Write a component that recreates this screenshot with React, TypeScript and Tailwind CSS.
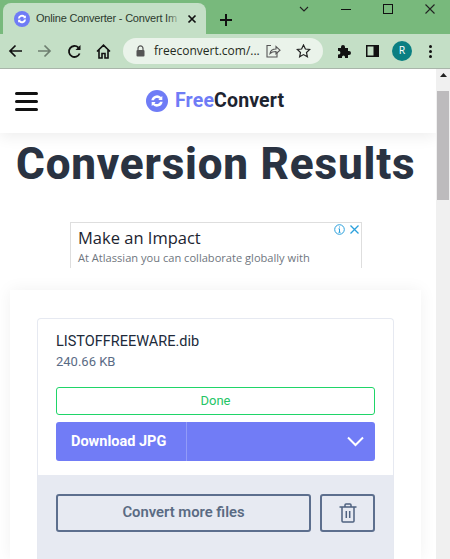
import React from "react";

const F = "[font-family:Roboto,'Liberation_Sans',sans-serif]";

function Logo({ size }: { size: number }) {
  return (
    <svg width={size} height={size} viewBox="0 0 24 24">
      <circle cx="12" cy="12" r="12" fill="#6f7cf6" />
      <path d="M5.800 11.200a6.300 6.300 0 0 1 10.600-3.600l1.400-1v4.400h-4.400l1.400-1.400a3.900 3.900 0 0 0-6.200 1.600z" fill="#fff" />
      <path d="M18.200 12.800a6.300 6.300 0 0 1-10.600 3.600l-1.400 1v-4.400h4.400l-1.400 1.400a3.900 3.900 0 0 0 6.200-1.600z" fill="#fff" />
    </svg>
  );
}

function Chrome() {
  return (
    <div className="flex flex-col shrink-0 font-['Open_Sans',sans-serif]">
      <div className="h-[34px] bg-[#78b97c] flex items-end relative">
        <div className="ml-[3px] w-[203px] h-[31px] bg-[#c4dfc6] rounded-t-lg flex items-center pl-[11px]">
          <Logo size={16} />
          <div className="relative ml-[6px] w-[145px] overflow-hidden whitespace-nowrap text-[11px] tracking-[-0.2px] text-[#2c3a2e] font-['Liberation_Sans',sans-serif]">
            Online Converter - Convert Im
            <div className="absolute right-0 top-0 bottom-0 w-[14px] bg-gradient-to-r from-transparent to-[#c4dfc6]" />
          </div>
          <svg className="ml-[6px]" width="10" height="10" viewBox="0 0 10 10" stroke="#111" strokeWidth="1.700" fill="none"><path d="M1.500 1.500l7 7M8.500 1.500l-7 7" /></svg>
        </div>
        <svg className="ml-[14px] mb-[8px]" width="12" height="12" viewBox="0 0 12 12" stroke="#111" strokeWidth="2" fill="none"><path d="M6 0v12M0 6h12" /></svg>
        <div className="flex-1" />
        <div className="self-start flex items-center h-[18px]">
          <svg width="10" height="6" viewBox="0 0 10 6" stroke="#222" strokeWidth="1.100" fill="none"><path d="M1 1l4 4 4-4" /></svg>
          <div className="ml-[32px] w-[10px] h-[1px] bg-[#111]" />
          <div className="ml-[32px] w-[10px] h-[10px] border-[1.500px] border-[#111]" />
          <svg className="ml-[32px] mr-[15px]" width="10" height="10" viewBox="0 0 10 10" stroke="#222" strokeWidth="1.100" fill="none"><path d="M0.500 0.500l9 9M9.500 0.500l-9 9" /></svg>
        </div>
      </div>
      <div className="h-[34px] bg-[#c4dfc6] flex items-center border-b border-[#a9b5aa] box-content">
        <svg className="ml-[8px]" width="15" height="14" viewBox="0 0 15 14" stroke="#111" strokeWidth="1.700" fill="none"><path d="M14 7H2M7.500 1.500L2 7l5.500 5.500" /></svg>
        <svg className="ml-[14px]" width="15" height="14" viewBox="0 0 15 14" stroke="#6e7f70" strokeWidth="1.700" fill="none"><path d="M1 7h12M7.500 1.500L13 7l-5.500 5.500" /></svg>
        <svg className="ml-[15px]" width="15" height="15" viewBox="0 0 15 15" stroke="#111" strokeWidth="1.800" fill="none"><path d="M12.600 9.500A5.500 5.500 0 1 1 11.400 3.600" /><path d="M13.500 1v5h-5z" fill="#111" stroke="none" /></svg>
        <svg className="ml-[14px]" width="15" height="15" viewBox="0 0 15 15" stroke="#111" strokeWidth="1.600" fill="none"><path d="M1 7.500L7.500 1.200 14 7.500M3 6v8h3V9.500h3V14h3V6" /></svg>
        <div className="ml-[12px] w-[200px] h-[26px] rounded-full bg-[#eaf3ea] flex items-center pl-[13px]">
          <svg width="9" height="12" viewBox="0 0 9 12"><path d="M2 5V3.400a2.500 2.500 0 0 1 5 0V5" stroke="#555" strokeWidth="1.200" fill="none" /><rect x="0.500" y="5" width="8" height="6.500" rx="1" fill="#555" /></svg>
          <span className="ml-[9px] w-[105px] text-[12px] text-[#1f2a20] whitespace-nowrap">freeconvert.com/...</span>
          <svg className="ml-[7px]" width="15" height="14" viewBox="0 0 15 14" stroke="#555" strokeWidth="1.100" fill="none"><path d="M5 1.500H1v11.500h10V9" /><path d="M4 9.500c.5-3 2.500-4.500 6-4.500V2.500l4 3.700-4 3.500V7.500c-2.500 0-4.500.5-6 2z" /></svg>
          <svg className="ml-[15px]" width="15" height="14" viewBox="0 0 15 14" stroke="#222" strokeWidth="1.200" fill="none"><path d="M7.500 1l1.900 4 4.300.5-3.200 3 .9 4.300-3.900-2.200-3.900 2.200.9-4.300-3.200-3 4.300-.5z" /></svg>
        </div>
        <svg className="ml-[14px]" width="14" height="14" viewBox="0 0 14 14" fill="#111"><path d="M1 4h3V3a2 2 0 0 1 4 0v1h3v3h1a2 2 0 0 1 0 4h-1v3H8v-1a1.500 1.500 0 0 0-3 0v1H1v-3.500h1a1.800 1.800 0 0 0 0-3.500H1z" /></svg>
        <svg className="ml-[15px]" width="13" height="12" viewBox="0 0 13 12"><rect x="0.750" y="0.750" width="11.500" height="10.500" fill="none" stroke="#111" strokeWidth="1.500" /><rect x="7.500" y="1" width="5" height="10" fill="#111" /></svg>
        <div className="ml-[13px] w-[20px] h-[20px] rounded-full bg-[#0b7f82] flex items-center justify-center text-white text-[10.500px]">R</div>
        <div className="ml-[17px] flex flex-col gap-[2px]">
          <div className="w-[3px] h-[3px] rounded-full bg-[#111]" />
          <div className="w-[3px] h-[3px] rounded-full bg-[#111]" />
          <div className="w-[3px] h-[3px] rounded-full bg-[#111]" />
        </div>
      </div>
    </div>
  );
}

function Ad() {
  return (
    <div className="ml-[70px] w-[292px] h-[46px] border border-b-0 border-[#dedede] bg-white relative pl-[7px] font-['Open_Sans',sans-serif]">
      <div className="text-[16.500px] leading-[20px] mt-[5px] text-[#1c2430] whitespace-nowrap">Make an Impact</div>
      <div className="text-[11.100px] leading-[14px] mt-[3px] text-[#6f767e] whitespace-nowrap">At Atlassian you can collaborate globally with</div>
      <div className="absolute top-[1px] right-[2px] flex items-center gap-[5px]">
        <svg width="11" height="11" viewBox="0 0 11 11" fill="none" stroke="#2ba0dc" strokeWidth="1"><circle cx="5.500" cy="5.500" r="4.800" /><path d="M5.500 4.800v3.500M4.500 8.300h2M4.500 4.800h1M5.500 2.500v1" /></svg>
        <svg width="9" height="9" viewBox="0 0 9 9" fill="none" stroke="#2ba0dc" strokeWidth="1.300"><path d="M0.500 0.500l8 8M8.500 0.500l-8 8" /></svg>
      </div>
    </div>
  );
}

function Card() {
  return (
    <div className={`mt-[22px] ml-[10px] w-[411px] h-[269px] shrink-0 bg-white pt-[28px] pl-[27px] shadow-[0_0_16px_rgba(0,0,0,0.06)] ${F}`}>
      <div className="w-[357px] h-[241px] border border-b-0 border-[#e6e9f1] rounded-t-[4px] flex flex-col">
        <div className="h-[156px] px-[18px] pt-[14px] flex flex-col">
          <div className="text-[14.500px] leading-[17px] text-[#202a3a]">LISTOFFREEWARE.dib</div>
          <div className="mt-[4px] text-[13px] leading-[16px] text-[#5a6b85]">240.66 KB</div>
          <div className="mt-[17px] h-[28px] border border-[#1fd568] rounded-[3px] flex items-center justify-center text-[13px] font-normal text-[#25c566]">Done</div>
          <div className="mt-[7px] h-[39px] bg-[#717cf6] rounded-[3px] flex items-center text-white">
            <div className="w-[131px] h-full flex items-center pl-[15px] border-r border-[#929bf8] text-[14.500px] font-bold">Download JPG</div>
            <div className="flex-1" />
            <svg className="mr-[11px]" width="17" height="11" viewBox="0 0 17 11" fill="none" stroke="#fff" strokeWidth="2"><path d="M1 1.500l7.500 7.500L16 1.500" /></svg>
          </div>
        </div>
        <div className="flex-1 bg-[#e7eaf2] px-[18px] pt-[19px] flex items-start">
          <div className="w-[255px] h-[38px] border-2 border-[#5d6f8e] rounded-[3px] flex items-center justify-center pb-[1px] text-[14.800px] font-semibold text-[#5a6b83]">Convert more files</div>
          <div className="ml-[9px] w-[55px] h-[38px] border-2 border-[#5d6f8e] rounded-[3px] flex items-center justify-center pb-[1px]">
            <svg width="18" height="20" viewBox="0 0 18 20" fill="none" stroke="#4f6280" strokeWidth="1.500"><path d="M0.500 4h17M3 4v14a1 1 0 0 0 1 1h10a1 1 0 0 0 1-1V4M6 4V2a1 1 0 0 1 1-1h4a1 1 0 0 1 1 1v2M7.300 8v7M10.700 8v7" /></svg>
          </div>
        </div>
      </div>
    </div>
  );
}

export default function App() {
  return (
    <div className="w-[450px] h-[559px] overflow-hidden flex flex-col bg-white">
      <Chrome />
      <div className="flex flex-1 min-h-0">
        <div className="w-[436px] flex flex-col overflow-hidden">
          <div className="h-[64px] shrink-0 bg-white flex items-center relative z-10 shadow-[0_4px_14px_rgba(0,0,0,0.07)]">
            <div className="ml-[15px] flex flex-col gap-[5px]">
              <div className="w-[23px] h-[3px] rounded-full bg-[#111]" />
              <div className="w-[23px] h-[3px] rounded-full bg-[#111]" />
              <div className="w-[23px] h-[3px] rounded-full bg-[#111]" />
            </div>
            <div className="ml-[108px]"><Logo size={22} /></div>
            <div className={`ml-[7px] text-[19.500px] font-bold tracking-[0.15px] ${F}`}><span className="text-[#6f7cf6]">Free</span><span className="text-[#1d2430]">Convert</span></div>
          </div>
          <h1 className={`pl-[16px] mt-[7px] h-[49px] shrink-0 text-[44px] leading-[49px] font-extrabold tracking-[0.8px] text-[#2a3342] whitespace-nowrap ${F}`}>Conversion Results</h1>
          <div className="mt-[33px] shrink-0"><Ad /></div>
          <Card />
        </div>
        <div className="w-[14px] shrink-0 bg-[#f0f0f0] flex flex-col items-center">
          <svg className="mt-[4px]" width="7" height="4" viewBox="0 0 7 4" fill="#222"><path d="M3.500 0L7 4H0z" /></svg>
          <div className="mt-[14px] w-[12px] h-[109px] bg-[#bdbbbd]" />
        </div>
      </div>
    </div>
  );
}
